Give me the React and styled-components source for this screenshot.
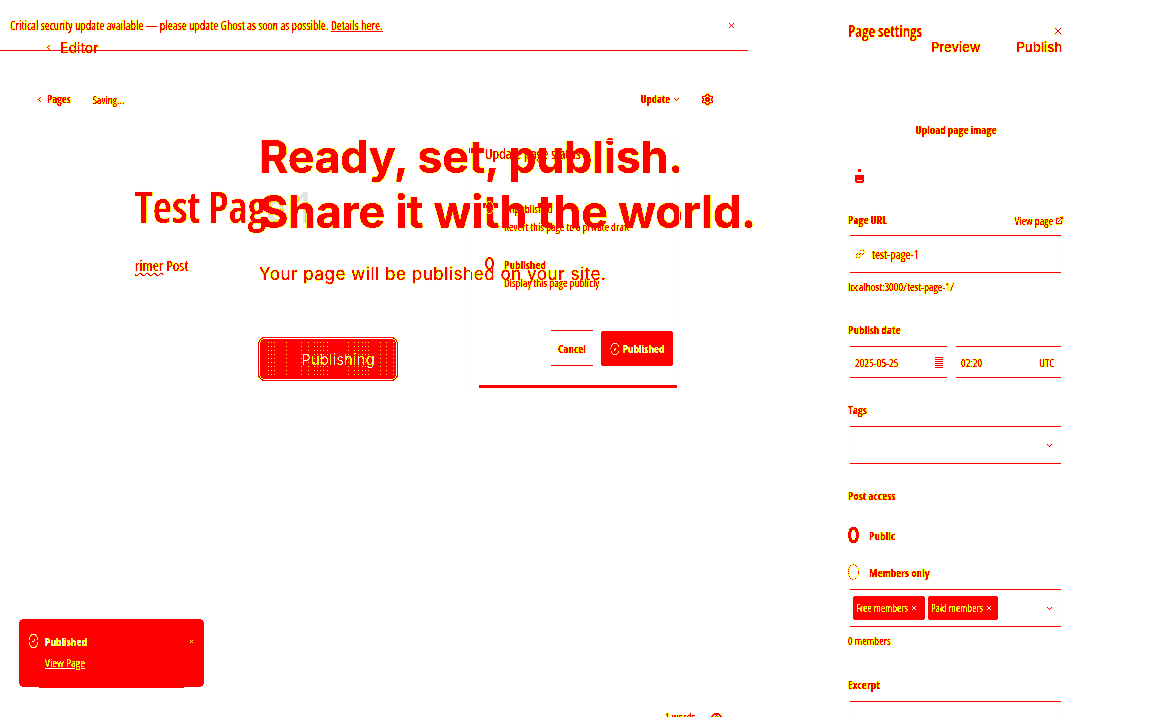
import React from 'react';
import styled, { createGlobalStyle, css } from 'styled-components';
import { ChevronDown, ChevronLeft, CircleCheck, ExternalLink, Link, Settings, X } from 'lucide-react';

const GlobalStyle = createGlobalStyle`
  html, body { margin: 0; padding: 0; background: #fff; }
  * { box-sizing: border-box; }
`;

const narrow = css`
  font-family: "Open Sans", "Liberation Sans", sans-serif;
  font-stretch: 62%;
  white-space: nowrap;
`;

const wide = css`
  font-family: Inter, "Liberation Sans", sans-serif;
  white-space: nowrap;
`;

const Page = styled.div`
  position: relative;
  display: flex;
  width: 1156px;
  height: 717px;
  overflow: hidden;
  background: #fff;
  color: #f00;
  text-shadow: 0 0 1px #ff0;
  filter: url(#crisp);
`;

const FilterDefs = styled.svg`
  position: absolute;
  width: 0;
  height: 0;
`;

/* Editor column */
const EditorPane = styled.div`
  display: flex;
  flex-direction: column;
  width: 748px;
  flex: none;
`;

const Banner = styled.div`
  display: flex;
  align-items: center;
  justify-content: space-between;
  height: 51px;
  padding: 0 12px 0 10px;
  border-bottom: 1px solid #f00;
  font-size: 12px;
  ${narrow}
  a { color: inherit; }
`;

const Toolbar = styled.div`
  display: flex;
  align-items: center;
  justify-content: space-between;
  height: 32px;
  margin-top: 32px;
  padding: 0 34px 0 35px;
  font-size: 11px;
  ${narrow}
`;

const ToolGroup = styled.div`
  display: flex;
  align-items: center;
  gap: ${p => p.$gap || 0}px;
`;

const Bold = styled.span`
  font-size: 10.5px;
  font-weight: 700;
`;

const EditorBody = styled.div`
  padding: 69px 0 0 135px;
`;

const Title = styled.div`
  height: 44px;
  font-size: 44px;
  font-weight: 600;
  line-height: 44px;
  ${narrow}
`;

const Faded = styled.span`
  color: #e4e4e4;
  text-shadow: none;
`;

const Excerpt = styled.div`
  margin-top: 27px;
  font-size: 15px;
  line-height: 20px;
  ${narrow}
`;

const Squiggle = styled.span`
  text-decoration: underline wavy #f00 1px;
`;

/* Settings column */
const Sidebar = styled.aside`
  display: flex;
  flex-direction: column;
  width: 216px;
  margin-left: 100px;
  padding-top: 21px;
  font-size: 11px;
  ${narrow}

  > * { flex: none; }
`;

const SideHead = styled.div`
  display: flex;
  align-items: center;
  justify-content: space-between;
  height: 20px;
  font-size: 15.5px;
  font-weight: 600;
`;

const UploadBox = styled.div`
  display: flex;
  flex-direction: column;
  align-items: center;
  height: 60px;
  margin-top: 81px;
  margin-bottom: 31px;
  font-weight: 700;
`;

const UploadIcon = styled.svg`
  align-self: flex-start;
  flex: none;
  margin: 32px 0 0 7px;
`;

const Row = styled.div`
  display: flex;
  justify-content: space-between;
  align-items: center;
  height: 14px;
`;

const Label = styled.div`
  height: 14px;
  line-height: 14px;
  font-weight: 700;
`;

const Field = styled.div`
  display: flex;
  align-items: center;
  justify-content: space-between;
  height: ${p => p.$h || 38}px;
  width: ${p => p.$w || '211px'};
  margin: ${p => p.$m || '8px 0 0 2px'};
  padding: 0 6px 0 ${p => p.$pl || 8}px;
  border-top: 1px solid #f00;
  border-bottom: 1px solid #f00;
  border-left: 1px solid #fdfdfd;
  border-right: 1px solid #fdfdfd;
`;

const FieldValue = styled.span`
  font-size: 12px;
`;

const Hint = styled.div`
  height: 14px;
  margin-top: 7px;
  line-height: 14px;
`;

const Section = styled.div`
  margin-top: ${p => p.$top}px;
`;

const DateRow = styled.div`
  display: flex;
  gap: 9px;
`;

const Calendar = styled.svg`
  flex: none;
  margin-right: -3px;
`;

const RadioRow = styled.div`
  display: flex;
  align-items: center;
  gap: 10px;
  height: 20px;
  margin-top: ${p => p.$top}px;
  font-weight: 700;
`;

const Radio = styled.span`
  display: block;
  flex: none;
  width: 11px;
  height: 16px;
  border-radius: 50%;
  border: ${p => (p.$on ? '3px solid #f00' : '1px dotted #f00')};
`;

const Chips = styled.div`
  display: flex;
  gap: 3px;
`;

const Chip = styled.span`
  display: flex;
  align-items: center;
  gap: 2px;
  width: ${p => p.$w}px;
  height: 24px;
  padding: 0 3px;
  border-radius: 3px;
  background: #f00;
  color: #fff;
  font-size: 10.5px;
`;

/* Overlay parts, they sit over the editor */
const TopLink = styled.div`
  position: absolute;
  top: 39px;
  left: 44px;
  display: flex;
  align-items: center;
  gap: 7px;
  font-size: 14px;
  ${wide}
`;

const TopActions = styled.div`
  position: absolute;
  top: 39px;
  left: 931px;
  display: flex;
  gap: 36px;
  font-size: 13px;
  font-weight: 500;
  ${wide}
`;

const PublishScreen = styled.div`
  position: absolute;
  top: 129px;
  left: 259px;
`;

const Heading = styled.h1`
  margin: 0;
  font-size: 45px;
  font-weight: 700;
  line-height: 55px;
  letter-spacing: -0.36px;
  ${wide}
`;

const Sub = styled.p`
  margin: 23px 0 0;
  font-size: 17px;
  line-height: 24px;
  letter-spacing: 0.54px;
  ${wide}
`;

const dotColumns = [8, 11, 14, 26, 41, 48, 54, 57, 60, 63, 67, 88, 94, 98, 102, 105, 108, 120, 126, 133];

const PublishButton = styled.button`
  position: relative;
  display: block;
  width: 138px;
  height: 42px;
  margin-top: 52px;
  padding: 0 0 0 20px;
  border: 1px solid #fff;
  border-radius: 6px;
  box-shadow: 0 0 0 1px #f00;
  background: #f00;
  color: #fff;
  font-size: 15px;
  ${wide}

  &::before {
    content: '';
    position: absolute;
    inset: 3px 0;
    background-image: ${dotColumns.map(() => 'linear-gradient(#ff0 1px, transparent 1px)').join(', ')};
    background-position: ${dotColumns.map(x => `${x}px 0`).join(', ')};
    background-size: 1px 4px;
    background-repeat: repeat-y;
  }
`;

const ButtonLabel = styled.span`
  position: relative;
`;

const Popover = styled.div`
  position: absolute;
  top: 140px;
  left: 470px;
  width: 210px;
  height: 249px;
  padding: 4px 6px 0 14px;
  border: 1px solid #fdfdfd;
  font-size: 11px;
  ${narrow}

  &::after {
    content: '';
    position: absolute;
    left: 8px;
    right: 2px;
    bottom: 0;
    height: 3px;
    background: #f00;
  }
`;

const PopTitle = styled.div`
  font-size: 14.5px;
  line-height: 18px;
`;

const Option = styled.div`
  display: flex;
  gap: 10px;
  margin-top: ${p => p.$top}px;
  line-height: 18px;
`;

const Ring = styled.span`
  display: block;
  flex: none;
  width: 9px;
  height: 13px;
  margin-top: 1px;
  border-radius: 50%;
  border: ${p => (p.$on ? '2px solid #f00' : '1px solid #fff')};
`;

const OptionName = styled.div`
  font-weight: ${p => (p.$on ? 700 : 400)};
`;

const PopFooter = styled.div`
  display: flex;
  justify-content: flex-end;
  gap: 8px;
  margin-top: 38px;
`;

const CancelButton = styled.span`
  display: flex;
  align-items: center;
  justify-content: center;
  width: 42px;
  height: 36px;
  border-top: 1px solid #f00;
  border-bottom: 1px solid #f00;
  font-weight: 700;
`;

const DoneButton = styled.span`
  display: flex;
  align-items: center;
  justify-content: center;
  gap: 3px;
  width: 72px;
  height: 35px;
  margin-top: 1px;
  border-radius: 3px;
  background: #f00;
  color: #fff;
  font-weight: 700;
`;

const Toast = styled.div`
  position: absolute;
  top: 619px;
  left: 19px;
  width: 185px;
  height: 68px;
  padding: 12px 9px 0 9px;
  border-radius: 5px;
  background: #f00;
  color: #fff;
  font-size: 11px;
  ${narrow}

  &::after {
    content: '';
    position: absolute;
    left: 20px;
    right: 20px;
    bottom: -1px;
    height: 1px;
    background: #f00;
  }
`;

const ToastHead = styled.div`
  display: flex;
  align-items: center;
  gap: 6px;
  height: 20px;
  font-weight: 700;
`;

const ToastLink = styled.div`
  margin: 4px 0 0 17px;
  font-size: 11.5px;
  text-decoration: underline;
`;

const Spacer = styled.span`
  flex: 1;
`;

const WordCount = styled.div`
  position: absolute;
  top: 709px;
  left: 665px;
  display: flex;
  align-items: center;
  gap: 16px;
  font-size: 11px;
  ${narrow}
`;

const HelpIcon = styled.svg`
  flex: none;
  margin-top: 3px;
`;

const table = f => Array.from({ length: 256 }, (_, i) => f(i).toFixed(3)).join(' ');
const greenValues = table(i => (i < 140 ? 0 : i < 228 ? 1 : i / 255));
const blueValues = table(i => (i < 228 ? 0 : i / 255));

const App = () => (
  <>
    <GlobalStyle />
    <FilterDefs aria-hidden="true">
      <filter id="crisp" colorInterpolationFilters="sRGB" x="0" y="0" width="100%" height="100%">
        <feComponentTransfer>
          <feFuncG type="discrete" tableValues={greenValues} />
          <feFuncB type="discrete" tableValues={blueValues} />
        </feComponentTransfer>
      </filter>
    </FilterDefs>
    <Page>
      <EditorPane>
        <Banner>
          <span>
            Critical security update available — please update Ghost as soon as possible. <a href="#details">Details here.</a>
          </span>
          <X size={9} color="#f00" />
        </Banner>
        <Toolbar>
          <ToolGroup $gap={22}>
            <ToolGroup $gap={3}>
              <ChevronLeft size={9} strokeWidth={2.5} />
              <Bold>Pages</Bold>
            </ToolGroup>
            <span>Saving...</span>
          </ToolGroup>
          <ToolGroup $gap={21}>
            <ToolGroup $gap={3}>
              <Bold>Update</Bold>
              <ChevronDown size={7} strokeWidth={3} />
            </ToolGroup>
            <Settings size={13} strokeWidth={2.5} />
          </ToolGroup>
        </Toolbar>
        <EditorBody>
          <Title>
            Test Pag<Faded>e 1</Faded>
          </Title>
          <Excerpt>
            <Squiggle>rimer</Squiggle> Post
          </Excerpt>
        </EditorBody>
      </EditorPane>

      <Sidebar>
        <SideHead>
          <span>Page settings</span>
          <X size={12} strokeWidth={1.5} />
        </SideHead>
        <UploadBox>
          <span>Upload page image</span>
          <UploadIcon width="9" height="14" viewBox="0 0 9 14">
            <rect x="3" y="0" width="3" height="3" fill="#f00" />
            <path d="M1 6v7h7V6M1 10h7v3H1z" fill="#f00" stroke="#f00" />
          </UploadIcon>
        </UploadBox>
        <Row>
          <Label>Page URL</Label>
          <ToolGroup $gap={2}>
            <span>View page</span>
            <ExternalLink size={9} strokeWidth={2.5} />
          </ToolGroup>
        </Row>
        <Field $pl={4}>
          <ToolGroup $gap={7}>
            <Link size={10} strokeWidth={1.5} />
            <FieldValue>test-page-1</FieldValue>
          </ToolGroup>
        </Field>
        <Hint>localhost:3000/test-page-1/</Hint>
        <Section $top={29}>
          <Label>Publish date</Label>
          <DateRow>
            <Field $w="97px" $h={32} $pl={4} $m="9px 0 0 2px">
              <span>2025-05-25</span>
              <Calendar width="8" height="11" viewBox="0 0 8 11">
                <path d="M0 .5h8M0 2.5h8M0 4.5h8M0 6.5h8M0 8.5h8M0 10.5h8" stroke="#f00" />
              </Calendar>
            </Field>
            <Field $w="105px" $h={32} $pl={4} $m="9px 0 0 0">
              <span>02:20</span>
              <span>UTC</span>
            </Field>
          </DateRow>
        </Section>
        <Section $top={25}>
          <Label>Tags</Label>
          <Field $m="9px 0 0 2px">
            <span />
            <ChevronDown size={9} strokeWidth={2.5} />
          </Field>
        </Section>
        <Section $top={25}>
          <Label>Post access</Label>
          <RadioRow $top={22}>
            <Radio $on />
            <span>Public</span>
          </RadioRow>
          <RadioRow $top={17}>
            <Radio />
            <span>Members only</span>
          </RadioRow>
          <Field $m="7px 0 0 2px" $pl={2}>
            <Chips>
              <Chip $w={72}>
                <span>Free members</span>
                <X size={8} strokeWidth={3} />
              </Chip>
              <Chip $w={70}>
                <span>Paid members</span>
                <X size={8} strokeWidth={3} />
              </Chip>
            </Chips>
            <ChevronDown size={9} strokeWidth={2.5} />
          </Field>
          <Hint>0 members</Hint>
        </Section>
        <Section $top={30}>
          <Label>Excerpt</Label>
          <Field $m="9px 0 0 2px" $h={60}>
            <span />
          </Field>
        </Section>
      </Sidebar>

      <TopLink>
        <ChevronLeft size={9} strokeWidth={2.5} />
        <span>Editor</span>
      </TopLink>
      <TopActions>
        <span>Preview</span>
        <span>Publish</span>
      </TopActions>

      <PublishScreen>
        <Heading>
          Ready, set, publish.
          <br />
          Share it with the world.
        </Heading>
        <Sub>Your page will be published on your site.</Sub>
        <PublishButton>
          <ButtonLabel>Publishing</ButtonLabel>
        </PublishButton>
      </PublishScreen>

      <Popover>
        <PopTitle>Update page status</PopTitle>
        <Option $top={37}>
          <Ring />
          <div>
            <OptionName>Unpublished</OptionName>
            <div>Revert this page to a private draft</div>
          </div>
        </Option>
        <Option $top={20}>
          <Ring $on />
          <div>
            <OptionName $on>Published</OptionName>
            <div>Display this page publicly</div>
          </div>
        </Option>
        <PopFooter>
          <CancelButton>Cancel</CancelButton>
          <DoneButton>
            <CircleCheck width={10} height={14} preserveAspectRatio="none" />
            Published
          </DoneButton>
        </PopFooter>
      </Popover>

      <Toast>
        <ToastHead>
          <CircleCheck width={11} height={16} preserveAspectRatio="none" />
          <span>Published</span>
          <Spacer />
          <X size={7} strokeWidth={3} />
        </ToastHead>
        <ToastLink>View Page</ToastLink>
      </Toast>

      <WordCount>
        <span>1 words</span>
        <HelpIcon width="11" height="11" viewBox="0 0 11 11">
          <circle cx="5.5" cy="5.5" r="4.7" fill="none" stroke="#f00" strokeWidth="1.4" />
          <path d="M3.8 4.3a1.7 1.7 0 1 1 1.7 2v1" fill="none" stroke="#f00" />
        </HelpIcon>
      </WordCount>
    </Page>
  </>
);

export default App;
